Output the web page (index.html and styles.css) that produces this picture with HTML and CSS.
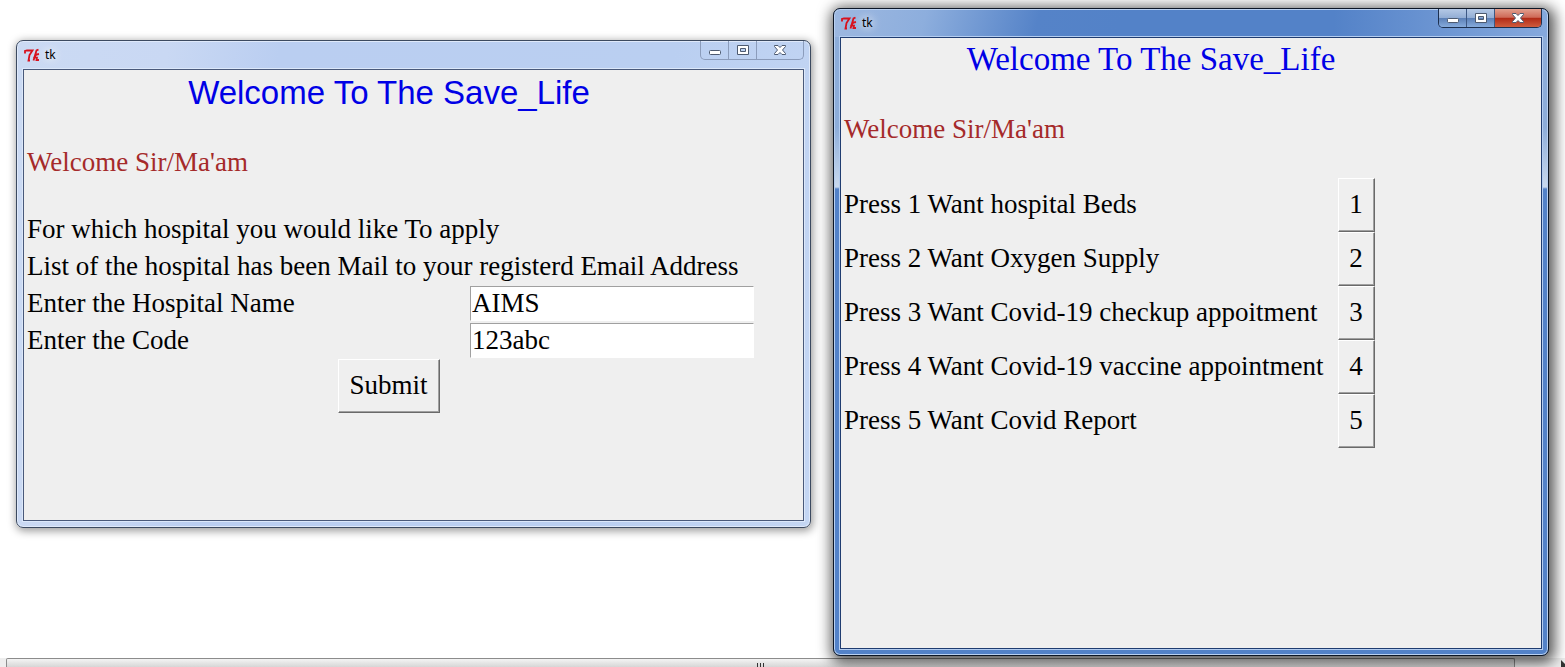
FILE: index.html
```html
<!DOCTYPE html>
<html lang="en">
<head>
<meta charset="utf-8">
<title>Save_Life</title>
<link rel="stylesheet" href="styles.css">
</head>
<body>
<svg class="defs" aria-hidden="true">
  <symbol id="tk" viewBox="0 0 16 14">
    <path d="M1 5.500 V3 L3 2.500 H8.500 L5.500 7 L4.500 12.500 H6" fill="none" stroke="#d8101c" stroke-width="1.800"/>
    <path d="M14.500 1.500 L12.500 2.500 L9.500 12.500 M15 6 L12.500 6.500 L10.500 9 L13 9.500 L12.500 12 H15" fill="none" stroke="#d8101c" stroke-width="1.800"/>
  </symbol>
  <symbol id="min" viewBox="0 0 14 12"><rect x="1.500" y="6.500" width="11" height="4" rx="1" fill="#fff" stroke="#4d5a70"/></symbol>
  <symbol id="max" viewBox="0 0 14 12"><path d="M1.500 1.500h11v9h-11z M4.500 4.500v3h5v-3z" fill="#fff" fill-rule="evenodd" stroke="#4d5a70"/></symbol>
  <symbol id="close" viewBox="0 0 14 12"><path d="M1.500 1.500h3.500l2 2 2-2h3.500v1L9.500 6l3 3.500v1H9l-2-2-2 2H1.500v-1l3-3.500-3-3.500z" fill="#fff" stroke="#4d5a70"/></symbol>
</svg>

<main class="desktop">
  <section class="window window--idle">
    <header class="titlebar">
      <svg class="titlebar__icon"><use href="#tk"/></svg>
      <span class="titlebar__text">tk</span>
      <div class="controls">
        <button class="control" aria-label="Minimize"><svg><use href="#min"/></svg></button>
        <button class="control" aria-label="Maximize"><svg><use href="#max"/></svg></button>
        <button class="control control--close" aria-label="Close"><svg><use href="#close"/></svg></button>
      </div>
    </header>
    <div class="client">
      <form class="form" onsubmit="return false">
        <h1 class="heading heading--sans">Welcome To The Save_Life</h1>
        <p class="line greeting">Welcome Sir/Ma'am</p>
        <p class="line">For which hospital you would like To apply</p>
        <p class="line">List of the hospital has been Mail to your registerd Email Address</p>
        <div class="field">
          <label class="line" for="hospital">Enter the Hospital Name</label>
          <input class="entry" id="hospital" type="text" value="AIMS">
        </div>
        <div class="field">
          <label class="line" for="code">Enter the Code</label>
          <input class="entry" id="code" type="text" value="123abc">
        </div>
        <button class="button button--submit" type="submit">Submit</button>
      </form>
    </div>
  </section>

  <section class="window window--active">
    <header class="titlebar">
      <svg class="titlebar__icon"><use href="#tk"/></svg>
      <span class="titlebar__text">tk</span>
      <div class="controls">
        <button class="control" aria-label="Minimize"><svg><use href="#min"/></svg></button>
        <button class="control" aria-label="Maximize"><svg><use href="#max"/></svg></button>
        <button class="control control--close" aria-label="Close"><svg><use href="#close"/></svg></button>
      </div>
    </header>
    <div class="client">
      <div class="menu">
        <h2 class="heading">Welcome To The Save_Life</h2>
        <p class="line greeting">Welcome Sir/Ma'am</p>
        <div class="option"><label class="line" for="opt1">Press 1 Want hospital Beds</label><button class="button" id="opt1">1</button></div>
        <div class="option"><label class="line" for="opt2">Press 2 Want Oxygen Supply</label><button class="button" id="opt2">2</button></div>
        <div class="option"><label class="line" for="opt3">Press 3 Want Covid-19 checkup appoitment</label><button class="button" id="opt3">3</button></div>
        <div class="option"><label class="line" for="opt4">Press 4 Want Covid-19 vaccine appointment</label><button class="button" id="opt4">4</button></div>
        <div class="option"><label class="line" for="opt5">Press 5 Want Covid Report</label><button class="button" id="opt5">5</button></div>
      </div>
    </div>
  </section>

  <div class="scrollbar" aria-hidden="true">
    <div class="scrollbar__thumb"><i></i><i></i><i></i></div>
    <svg class="scrollbar__arrow" viewBox="0 0 5 7"><path d="M1 0l4 4v3H1z" fill="#333"/></svg>
  </div>
</main>
</body>
</html>
```

FILE: styles.css
```css
* { box-sizing: border-box; }

body {
  margin: 0;
  background: #fff;
  color: #000;
  font: 27px/37px "Liberation Serif", "Times New Roman", serif;
}

.defs { position: absolute; width: 0; height: 0; }

.desktop {
  position: relative;
  display: grid;
  grid-template-columns: 795fr 716fr;
  gap: 22px;
  min-height: 100vh;
  padding: 0 16px;
  overflow: hidden;
}

/* Window frames */
.window {
  position: relative;
  z-index: 1;
  display: flex;
  flex-direction: column;
  padding: 0 6px 6px;
  border: 1px solid;
  border-radius: 7px;
}

.window--idle {
  margin: 40px 0 139px;
  border-color: #3c4a60;
  background: linear-gradient(100deg, #cbdaf3 0, #c9d8f3 150px, #bacef1 260px, #bacff1 75%, #c4d6f3 100%);
  box-shadow: inset 0 0 0 1px #dfe9fa, 1px 2px 8px 1px rgba(0, 0, 0, .4);
}

.window--active {
  margin: 8px 0 11px;
  border-color: #0c1626;
  background:
    linear-gradient(105deg, #9db8e0 0, #8daedd 90px, #5583c8 200px, transparent 280px) top / 100% 28px no-repeat,
    linear-gradient(90deg, transparent 70%, #86a9dd) top / 100% 28px no-repeat,
    linear-gradient(#8dadd9 0, #8dadd9 90px, #c9d9ee 150px, transparent 152px) 0 28px / 7px 100% no-repeat,
    linear-gradient(#8dadd9 0, #8dadd9 90px, #c9d9ee 150px, transparent 152px) 100% 28px / 7px 100% no-repeat,
    #5382c8;
  box-shadow: inset 0 0 0 1px #b9d0f0, 2px 3px 14px 4px rgba(0, 0, 0, .65);
}

.titlebar {
  display: flex;
  align-items: center;
  height: 28px;
  padding-left: 1px;
}

.titlebar__icon { width: 16px; height: 14px; }

.titlebar__text {
  padding: 0 5px;
  font: 12px/16px "Noto Sans", sans-serif;
  text-shadow: 0 0 8px #fff, 0 0 12px #fff;
}

.controls {
  display: flex;
  align-self: flex-start;
  margin-left: auto;
  border: 1px solid #8b9cbb;
  border-top: 0;
  border-radius: 0 0 5px 5px;
  overflow: hidden;
}

.control {
  display: flex;
  align-items: center;
  justify-content: center;
  width: 28px;
  height: 18px;
  padding: 0;
  border: 0;
  border-right: 1px solid #8b9cbb;
  background: transparent;
}

.control svg { width: 14px; height: 12px; }
.control--close { width: 46px; border-right: 0; }

.window--active .controls { border-color: #1c3050; }
.window--active .control {
  border-color: #3d5884;
  background: linear-gradient(#b5c9e6 0, #93aed5 48%, #5c80b7 52%, #86abdc 100%);
}
.window--active .control--close {
  background: linear-gradient(#e2a08f 0, #cf6a58 46%, #b22c18 52%, #cf5c3e 100%);
}

.client {
  flex: 1;
  border: 1px solid #49597a;
  background: #efefef;
  box-shadow: 0 0 0 1px #dce8fa;
}
.window--active .client { border-color: #1f3c70; box-shadow: 0 0 0 1px #b4cdf0; }

/* Contents */
.heading {
  margin: 0 0 30px;
  color: #0000e6;
  font-size: 33px;
  font-weight: 400;
  line-height: 43px;
  text-align: center;
}
.heading--sans {
  margin-bottom: 29px;
  font-family: "Liberation Sans", Arial, sans-serif;
  line-height: 45px;
}

.line {
  display: block;
  margin: 0;
  padding-left: 3px;
  white-space: nowrap;
}
.greeting { margin-bottom: 30px; color: #a52a2a; }

.form { display: flex; flex-direction: column; width: 730px; }
.field { display: flex; justify-content: space-between; }

.entry {
  width: 284px;
  height: 35px;
  margin: 1px 0;
  padding: 0 1px;
  border: 1px solid;
  border-color: #a0a0a0 #fff #fff #a0a0a0;
  background: #fff;
  color: #000;
  font: inherit;
  line-height: 33px;
}

.button {
  height: 54px;
  padding: 0 11px 2px 10px;
  border: 1px solid;
  border-color: #fff #696969 #696969 #fff;
  background: #efefef;
  box-shadow: inset -1px -1px 0 #a0a0a0;
  color: #000;
  font: inherit;
}
.button--submit { align-self: center; }

.menu { width: 620px; }
.option {
  display: grid;
  grid-template-columns: 497px 37px;
  align-items: center;
}
.option .line { padding-bottom: 2px; }

/* Horizontal scrollbar behind the windows */
.scrollbar {
  position: absolute;
  right: 0;
  bottom: 0;
  left: 0;
  display: flex;
  justify-content: space-between;
  height: 9px;
  padding-left: 6px;
  background: #eee;
}
.scrollbar__thumb {
  display: flex;
  justify-content: center;
  gap: 2px;
  width: 1509px;
  padding-top: 4px;
  border: 1px solid #8c8c8c;
  border-bottom: 0;
  border-radius: 2px 2px 0 0;
  background: linear-gradient(#f4f4f4, #d6d6d6);
}
.scrollbar__thumb i { width: 1px; background: #333; }
.scrollbar__arrow { align-self: flex-end; width: 5px; height: 7px; }
```
